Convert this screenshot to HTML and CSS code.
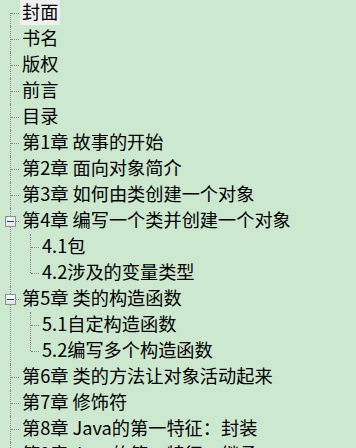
FILE: index.html
```html
<!DOCTYPE html>
<html>
<head>
    <title>目录树</title>
    <link rel="stylesheet" href="styles.css">
</head>
<body>
    <ul class="tree">
        <li><div class="row"><span class="label selected">封面</span></div></li>
        <li><div class="row"><span class="label">书名</span></div></li>
        <li><div class="row"><span class="label">版权</span></div></li>
        <li><div class="row"><span class="label">前言</span></div></li>
        <li><div class="row"><span class="label">目录</span></div></li>
        <li><div class="row"><span class="label">第1章 故事的开始</span></div></li>
        <li><div class="row"><span class="label">第2章 面向对象简介</span></div></li>
        <li><div class="row"><span class="label">第3章 如何由类创建一个对象</span></div></li>
        <li class="open">
            <div class="row"><span class="toggle"></span><span class="label">第4章 编写一个类并创建一个对象</span></div>
            <ul>
                <li><div class="row"><span class="label">4.1包</span></div></li>
                <li><div class="row"><span class="label">4.2涉及的变量类型</span></div></li>
            </ul>
        </li>
        <li class="open">
            <div class="row"><span class="toggle"></span><span class="label">第5章 类的构造函数</span></div>
            <ul>
                <li><div class="row"><span class="label">5.1自定构造函数</span></div></li>
                <li><div class="row"><span class="label">5.2编写多个构造函数</span></div></li>
            </ul>
        </li>
        <li><div class="row"><span class="label">第6章 类的方法让对象活动起来</span></div></li>
        <li><div class="row"><span class="label">第7章 修饰符</span></div></li>
        <li><div class="row"><span class="label">第8章 Java的第一特征：封装</span></div></li>
        <li><div class="row"><span class="label">第9章 Java的第二特征：继承</span></div></li>
    </ul>
</body>
</html>
```

FILE: styles.css
```css
body {
    margin: 0;
    padding: 0;
    background-color: #cce8cf;
    font-family: "Noto Sans CJK SC", "Microsoft YaHei", sans-serif;
    font-size: 18.2px;
    color: #000;
    overflow: hidden;
}

.tree, .tree ul {
    list-style: none;
    margin: 0;
    padding: 0;
}

.tree ul {
    padding-left: 20px;
}

.tree li {
    position: relative;
}

/* dotted tree lines */
.tree li::before {
    content: "";
    position: absolute;
    left: 10px;
    top: 0;
    bottom: 0;
    border-left: 1px dotted #8a8a8a;
}

.tree > li:first-child::before {
    top: 13px;
}

.tree ul > li:last-child::before {
    bottom: auto;
    height: 13px;
}

.tree li::after {
    content: "";
    position: absolute;
    left: 11px;
    top: 13px;
    width: 8px;
    border-top: 1px dotted #8a8a8a;
}

.row {
    display: flex;
    height: 26px;
    padding-left: 20px;
}

.label {
    height: 25px;
    line-height: 23px;
    padding: 0 2px;
    white-space: nowrap;
}

.label.selected {
    background-color: #f0f0f0;
}

/* expander box */
.toggle {
    position: absolute;
    left: 5px;
    top: 8px;
    width: 11px;
    height: 11px;
    box-sizing: border-box;
    border: 1px solid #919191;
    background: linear-gradient(#ffffff, #e3e3e3);
    z-index: 1;
}

.toggle::before {
    content: "";
    position: absolute;
    left: 1px;
    top: 4px;
    width: 7px;
    height: 1px;
    background-color: #1f3a93;
}
```
